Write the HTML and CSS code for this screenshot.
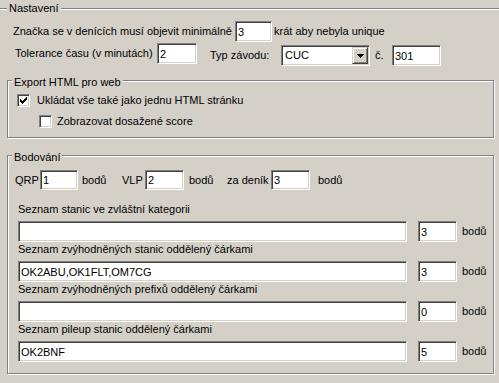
FILE: index.html
```html
<!DOCTYPE html>
<html lang="cs">
<head>
    <meta charset="UTF-8">
    <title>Nastavení</title>
    <link rel="stylesheet" href="styles.css">
</head>
<body>
    <div class="outer">
        <span class="legend legend-top">Nastavení</span>

        <div class="row r1">
            <span class="lbl-min">Značka se v denících musí objevit minimálně</span>
            <input class="edit w37" type="text" value="3">
            <span class="after">krát aby nebyla unique</span>
        </div>

        <div class="row r2">
            <span class="lbl-tol">Tolerance času (v minutách)</span>
            <input class="edit w40" type="text" value="2">
            <div class="typ">
                <span class="lbl-typ">Typ závodu:</span>
                <div class="combo">
                    <span class="combo-text">CUC</span>
                    <span class="combo-btn">
                        <svg width="7" height="4" viewBox="0 0 7 4"><path d="M0 0H7V1H6V2H5V3H4V4H3V3H2V2H1V1H0Z" fill="#000"/></svg>
                    </span>
                </div>
                <span class="lbl-c">č.</span>
                <input class="edit w49" type="text" value="301">
            </div>
        </div>

        <div class="group export">
            <span class="legend">Export HTML pro web</span>
            <div class="chk">
                <span class="box">
                    <svg width="7" height="7" viewBox="0 0 7 7"><path d="M0 2h1v3H0z M1 3h1v3H1z M2 4h1v3H2z M3 3h1v3H3z M4 2h1v3H4z M5 1h1v3H5z M6 0h1v3H6z" fill="#000"/></svg>
                </span>
                <span class="chk-lbl">Ukládat vše také jako jednu HTML stránku</span>
            </div>
            <div class="chk chk-sub">
                <span class="box"></span>
                <span class="chk-lbl">Zobrazovat dosažené score</span>
            </div>
        </div>

        <div class="group scoring">
            <span class="legend">Bodování</span>
            <div class="row pts">
                <span class="lbl-qrp">QRP</span>
                <input class="edit w38 h20" type="text" value="1">
                <span class="b1">bodů</span>
                <span class="lbl-vlp">VLP</span>
                <input class="edit w39 h20" type="text" value="2">
                <span class="b2">bodů</span>
                <span class="lbl-den">za deník</span>
                <input class="edit w39 h20" type="text" value="3">
                <span class="b3">bodů</span>
            </div>

            <div class="list">
                <div class="item">
                    <div class="item-lbl">Seznam stanic ve zvláštní kategorii</div>
                    <div class="row">
                        <input class="edit long" type="text" value="">
                        <input class="edit w39 small" type="text" value="3">
                        <span class="unit">bodů</span>
                    </div>
                </div>
                <div class="item">
                    <div class="item-lbl">Seznam zvýhodněných stanic oddělený čárkami</div>
                    <div class="row">
                        <input class="edit long" type="text" value="OK2ABU,OK1FLT,OM7CG">
                        <input class="edit w39 small" type="text" value="3">
                        <span class="unit">bodů</span>
                    </div>
                </div>
                <div class="item">
                    <div class="item-lbl">Seznam zvýhodněných prefixů oddělený čárkami</div>
                    <div class="row">
                        <input class="edit long" type="text" value="">
                        <input class="edit w39 small" type="text" value="0">
                        <span class="unit">bodů</span>
                    </div>
                </div>
                <div class="item">
                    <div class="item-lbl">Seznam pileup stanic oddělený čárkami</div>
                    <div class="row">
                        <input class="edit long" type="text" value="OK2BNF">
                        <input class="edit w39 small" type="text" value="5">
                        <span class="unit">bodů</span>
                    </div>
                </div>
            </div>
        </div>
    </div>
</body>
</html>
```

FILE: styles.css
```css
* {
    box-sizing: border-box;
}

html, body {
    overflow: hidden;
}

body {
    margin: 0;
    width: 499px;
    height: 383px;
    background-color: #d4d0c8;
    font-family: "Liberation Sans", Arial, sans-serif;
    font-size: 11px;
    line-height: 13px;
    color: #000;
}

/* group boxes (etched frame) */
.outer {
    position: relative;
    margin: 8px 0 0 -2px;
    width: 504px;
    height: 375px;
    border: 1px solid #808080;
    border-bottom: none;
    box-shadow: inset 1px 1px #fff;
    padding: 12px 0 0 8px;
}

.group {
    position: relative;
    width: 487px;
    border: 1px solid #808080;
    box-shadow: inset 1px 1px #fff, 1px 1px #fff;
}

.legend {
    position: absolute;
    top: -5px;
    left: 4px;
    padding: 0 2px;
    background-color: #d4d0c8;
    white-space: nowrap;
}

.legend-top {
    top: -7px;
    left: 8px;
}

.row {
    display: flex;
    align-items: center;
    white-space: nowrap;
}

/* sunken edit field */
.edit {
    height: 21px;
    margin: 0;
    padding: 0 2px;
    border: 1px solid;
    border-color: #808080 #fff #fff #808080;
    box-shadow: inset 1px 1px #404040, inset -1px -1px #d4d0c8;
    background-color: #fff;
    font: inherit;
    color: #000;
    outline: none;
}

.h20 { height: 20px; }
.w37 { width: 37px; }
.w38 { width: 38px; }
.w39 { width: 39px; }
.w40 { width: 40px; }
.w49 { width: 49px; }

/* first two rows */
.r1 {
    margin-left: 6px;
    height: 21px;
}

.lbl-min { width: 222px; }

.after { margin-left: 2px; }

.r2 {
    margin-top: 1px;
    margin-left: 8px;
    align-items: flex-start;
}

.lbl-tol {
    width: 142px;
    line-height: 21px;
}

.typ {
    display: flex;
    align-items: center;
    margin-top: 2px;
    margin-left: 13px;
}

.lbl-typ { width: 71px; }

.lbl-c {
    width: 17px;
    margin-left: 5px;
}

.combo {
    display: flex;
    align-items: center;
    width: 89px;
    height: 21px;
    padding: 1px;
    border: 1px solid;
    border-color: #808080 #fff #fff #808080;
    box-shadow: inset 1px 1px #404040, inset -1px -1px #d4d0c8;
    background-color: #fff;
}

.combo-text {
    flex: 1;
    padding-left: 2px;
}

.combo-btn {
    display: flex;
    align-items: center;
    justify-content: center;
    width: 16px;
    height: 17px;
    border: 1px solid;
    border-color: #d4d0c8 #404040 #404040 #d4d0c8;
    box-shadow: inset 1px 1px #fff, inset -1px -1px #808080;
    background-color: #d4d0c8;
}

/* export box */
.export {
    margin-top: 14px;
    padding: 13px 0 9px 9px;
}

.chk {
    display: flex;
    align-items: center;
    height: 13px;
}

.chk-sub {
    margin-top: 8px;
    margin-left: 22px;
}

.box {
    display: flex;
    align-items: center;
    justify-content: center;
    width: 13px;
    height: 13px;
    border: 1px solid;
    border-color: #808080 #fff #fff #808080;
    box-shadow: inset 1px 1px #404040, inset -1px -1px #d4d0c8;
    background-color: #fff;
}

.chk-lbl { margin-left: 7px; }

.chk-sub .chk-lbl { margin-left: 5px; }

/* scoring box */
.scoring {
    margin-top: 17px;
    height: 219px;
    padding: 14px 0 0 7px;
}

.pts { height: 20px; }

.lbl-qrp { width: 25px; }
.b1 { width: 40px; margin-left: 4px; }
.lbl-vlp { width: 23px; }
.b2 { width: 38px; margin-left: 5px; }
.lbl-den { width: 44px; }
.b3 { margin-left: 8px; }

.list {
    margin-top: 12px;
    margin-left: 3px;
}

.item-lbl {
    line-height: 14px;
    margin-bottom: 5px;
}

.long { width: 389px; }

.small { margin-left: 11px; }

.unit { margin-left: 5px; }
```
